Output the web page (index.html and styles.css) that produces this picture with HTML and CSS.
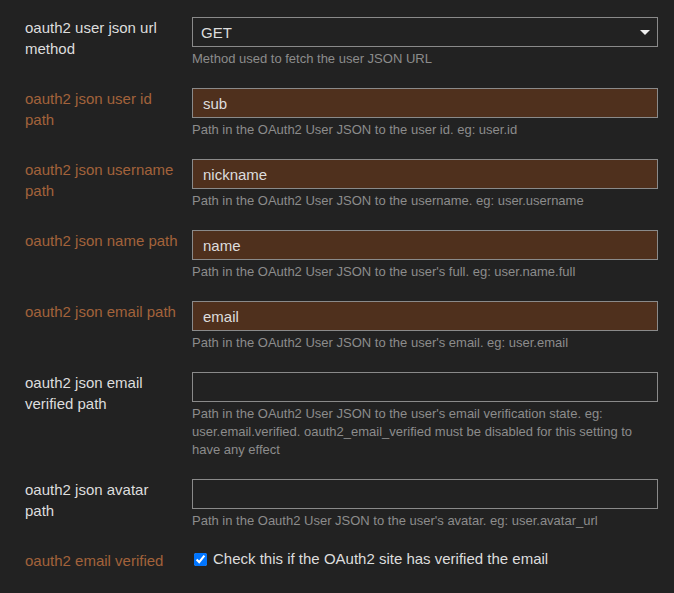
FILE: index.html
```html
<!DOCTYPE html>
<html lang="en">

<head>
    <meta charset="UTF-8">
    <meta name="viewport" content="width=device-width, initial-scale=1.0">
    <title>OAuth2 settings</title>
    <link rel="stylesheet" href="styles.css">
</head>

<body>
    <div class="settings">
        <div class="row">
            <label class="name">oauth2 user json url method</label>
            <div class="value">
                <div class="select-wrap">
                    <select class="field">
                        <option>GET</option>
                        <option>POST</option>
                    </select>
                </div>
                <p class="desc">Method used to fetch the user JSON URL</p>
            </div>
        </div>
        <div class="row">
            <label class="name changed">oauth2 json user id path</label>
            <div class="value">
                <input class="field changed" type="text" value="sub">
                <p class="desc">Path in the OAuth2 User JSON to the user id. eg: user.id</p>
            </div>
        </div>
        <div class="row">
            <label class="name changed">oauth2 json username path</label>
            <div class="value">
                <input class="field changed" type="text" value="nickname">
                <p class="desc">Path in the OAuth2 User JSON to the username. eg: user.username</p>
            </div>
        </div>
        <div class="row">
            <label class="name changed">oauth2 json name path</label>
            <div class="value">
                <input class="field changed" type="text" value="name">
                <p class="desc">Path in the OAuth2 User JSON to the user's full. eg: user.name.full</p>
            </div>
        </div>
        <div class="row">
            <label class="name changed">oauth2 json email path</label>
            <div class="value">
                <input class="field changed" type="text" value="email">
                <p class="desc">Path in the OAuth2 User JSON to the user's email. eg: user.email</p>
            </div>
        </div>
        <div class="row">
            <label class="name">oauth2 json email verified path</label>
            <div class="value">
                <input class="field" type="text" value="">
                <p class="desc">Path in the OAuth2 User JSON to the user's email verification state. eg: user.email.verified. oauth2_email_verified must be disabled for this setting to have any effect</p>
            </div>
        </div>
        <div class="row">
            <label class="name">oauth2 json avatar path</label>
            <div class="value">
                <input class="field" type="text" value="">
                <p class="desc">Path in the Oauth2 User JSON to the user's avatar. eg: user.avatar_url</p>
            </div>
        </div>
        <div class="row">
            <label class="name changed">oauth2 email verified</label>
            <div class="value">
                <label class="check"><input type="checkbox" checked>Check this if the OAuth2 site has verified the email</label>
            </div>
        </div>
    </div>
</body>

</html>
```

FILE: styles.css
```css
html,
body {
    margin: 0;
    background-color: #222222;
}

body {
    font-family: "Liberation Sans", Arial, sans-serif;
    color: #dddddd;
}

.settings {
    padding: 17px 16px 0 25px;
}

.row {
    display: flex;
    gap: 12px;
    margin-bottom: 20px;
}

.name {
    width: 155px;
    flex-shrink: 0;
    font-size: 15px;
    line-height: 21px;
    color: #dddddd;
}

.name.changed {
    color: #a3623b;
}

.value {
    width: 466px;
}

.field {
    display: block;
    box-sizing: border-box;
    width: 100%;
    height: 30px;
    margin: 0;
    padding: 0 10px;
    border: 1px solid #8a8a8a;
    border-radius: 0;
    background-color: #222222;
    color: #dddddd;
    font-family: "Liberation Sans", Arial, sans-serif;
    font-size: 15px;
    outline: none;
}

.field.changed {
    background-color: #4f301d;
}

.select-wrap {
    position: relative;
}

select.field {
    appearance: none;
    padding-left: 8px;
}

/* little white caret on the right of the select */
.select-wrap::after {
    content: "";
    position: absolute;
    right: 8px;
    top: 13px;
    border-left: 5px solid transparent;
    border-right: 5px solid transparent;
    border-top: 5px solid #eeeeee;
    pointer-events: none;
}

.desc {
    margin: 3px 0 0;
    font-size: 13px;
    line-height: 18px;
    color: #8c8c8c;
}

.check {
    display: flex;
    align-items: center;
    font-size: 15px;
    line-height: 18px;
    color: #dddddd;
}

.check input {
    width: 13px;
    height: 13px;
    margin: 0 6px 0 2px;
    accent-color: #0075ff;
}
```
